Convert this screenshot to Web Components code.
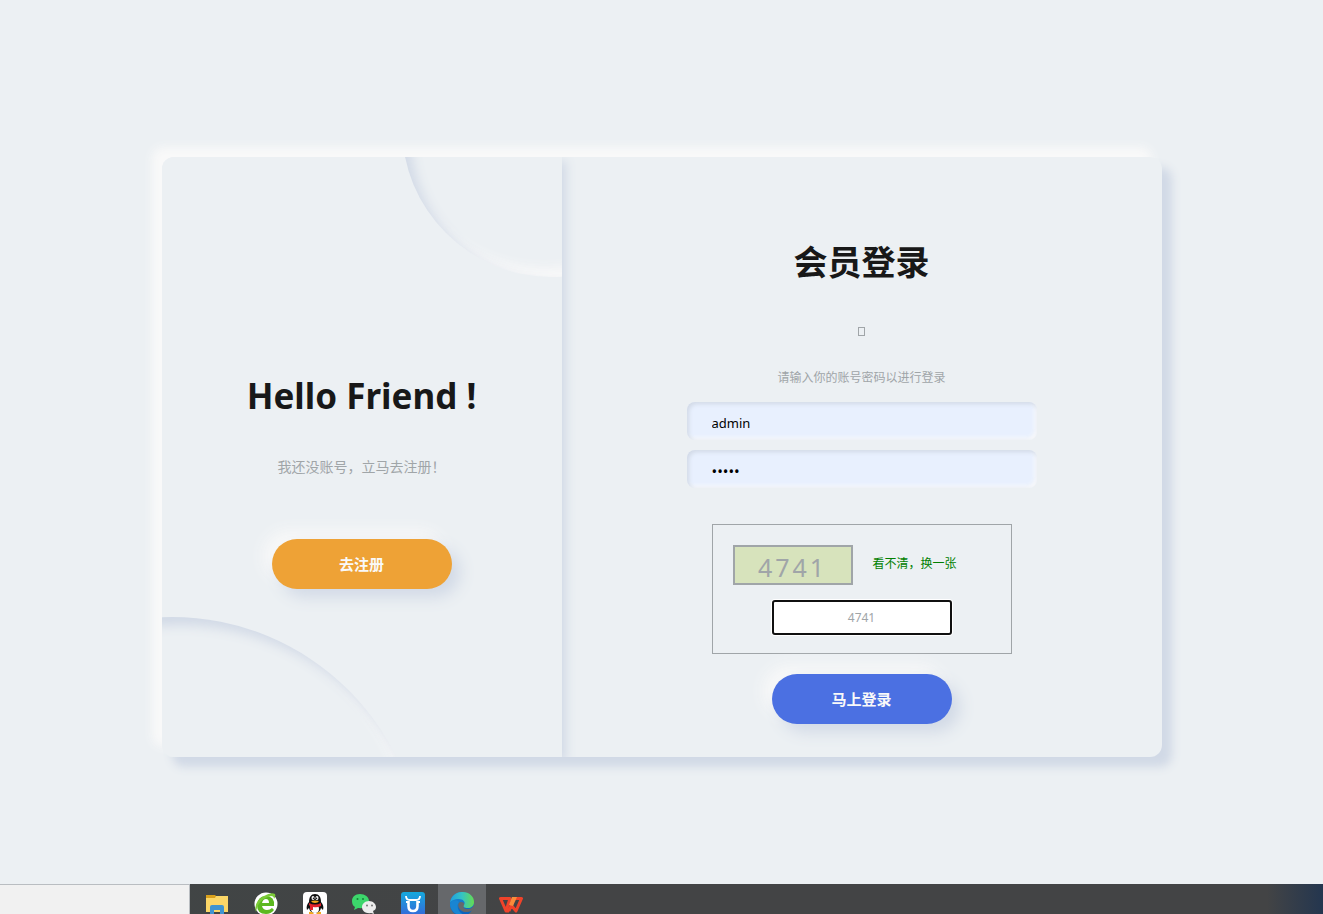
<!DOCTYPE html>
<html lang="zh-CN">
<head>
<meta charset="UTF-8">
<meta name="viewport" content="width=device-width, initial-scale=1">
<title>会员登录</title>
<style>
  * { box-sizing: border-box; }
  body {
    margin: 0;
    font-family: "Noto Sans", "Noto Sans CJK SC", sans-serif;
    font-size: 12px;
    color: #a0a5a8;
    background: #ecf0f3;
  }
</style>
</head>
<body>
<login-page>
  <welcome-panel slot="aside" titulo="Hello Friend !" texto="我还没账号，立马去注册！">
    <neu-button color="#eea236">去注册</neu-button>
  </welcome-panel>
  <login-form slot="main"></login-form>
</login-page>
<task-bar></task-bar>

<script>
class NeuButton extends HTMLElement {
  constructor() {
    super();
    this.shadow = this.attachShadow({ mode: 'open' });
  }

  connectedCallback() {
    this.shadow.innerHTML = `
      <style>
        :host { display: block; }
        button {
          display: block;
          width: 180px;
          height: 50px;
          padding: 0 0 2px;
          border: none;
          border-radius: 25px;
          background: ${this.getAttribute('color')};
          box-shadow: 8px 8px 16px #d1d9e6, -8px -8px 16px #f9f9f9;
          color: #f9f9f9;
          font: bold 15px "Noto Sans CJK SC", sans-serif;
          cursor: pointer;
        }
      </style>
      <button type="button"><slot></slot></button>
    `;
  }
}

class WelcomePanel extends HTMLElement {
  constructor() {
    super();
    this.shadow = this.attachShadow({ mode: 'open' });
  }

  connectedCallback() {
    this.shadow.innerHTML = `
      <style>
        :host {
          position: relative;
          display: flex;
          flex-direction: column;
          align-items: center;
          justify-content: center;
          box-sizing: border-box;
          height: 100%;
          padding-top: 20px;
          overflow: hidden;
          background: #ecf0f3;
        }
        .circle {
          position: absolute;
          border-radius: 50%;
          box-shadow: inset 8px 8px 12px #d1d9e6, inset -8px -8px 12px #f9f9f9;
        }
        .bottom { width: 500px; height: 500px; bottom: -60%; left: -60%; }
        .top { width: 300px; height: 300px; top: -30%; left: 60%; }
        h2 { margin: 0; font-size: 35px; line-height: 102px; color: #181818; }
        p { margin: 8px 0 60px; font-size: 14px; line-height: 24px; }
        neu-button { position: relative; }
      </style>
      <div class="circle bottom"></div>
      <div class="circle top"></div>
      <h2>${this.getAttribute('titulo')}</h2>
      <p>${this.getAttribute('texto')}</p>
      <slot></slot>
    `;
  }
}

class CaptchaBox extends HTMLElement {
  constructor() {
    super();
    this.shadow = this.attachShadow({ mode: 'open' });
    this.codigo = '4741';
  }

  connectedCallback() {
    this.shadow.innerHTML = `
      <style>
        :host {
          display: flex;
          flex-direction: column;
          align-items: center;
          gap: 15px;
          box-sizing: border-box;
          width: 300px;
          height: 130px;
          padding: 20px;
          border: 1px solid #a0a5a8;
        }
        .row { display: flex; align-items: center; gap: 20px; width: 100%; }
        .code {
          box-sizing: border-box;
          width: 120px;
          height: 40px;
          border: 2px solid #a0a5a8;
          background: #d7e3bc;
          font: 25px/40px "Noto Sans", sans-serif;
          letter-spacing: 3px;
          text-align: center;
        }
        a { color: green; text-decoration: none; line-height: 20px; padding-bottom: 2px; }
        input {
          box-sizing: border-box;
          flex: none;
          width: 180px;
          height: 35px;
          padding: 0;
          border: 2px solid #101010;
          border-radius: 3px;
          outline: none;
          background: #fff;
          box-shadow: 0 0 0 1px #fff;
          color: #a0a5a8;
          font: 12px "Noto Sans", sans-serif;
          text-align: center;
        }
      </style>
      <div class="row">
        <div class="code">${this.codigo}</div>
        <a href="#">看不清，换一张</a>
      </div>
      <input type="text" aria-label="验证码" value="${this.codigo}">
    `;
    this.shadow.querySelector('a').addEventListener('click', e => {
      e.preventDefault();
      this.codigo = String(Math.floor(1000 + Math.random() * 9000));
      this.shadow.querySelector('.code').textContent = this.codigo;
    });
  }
}

class LoginForm extends HTMLElement {
  constructor() {
    super();
    this.shadow = this.attachShadow({ mode: 'open' });
  }

  connectedCallback() {
    this.shadow.innerHTML = `
      <style>
        :host { display: block; }
        form {
          display: flex;
          flex-direction: column;
          align-items: center;
          padding-top: 54px;
        }
        h2 { margin: 0; font-size: 34px; line-height: 102px; color: #181818; }
        /* icon font placeholder */
        i {
          box-sizing: border-box;
          width: 7px;
          height: 9px;
          margin: 14px 0 30px;
          border: 1px solid #a0a5a8;
        }
        p { margin: 0 0 12px; line-height: 24px; }
        input {
          box-sizing: border-box;
          width: 350px;
          height: 38px;
          margin-bottom: 10px;
          padding: 4px 25px 0;
          border: none;
          border-radius: 8px;
          outline: none;
          background: #e8f0fe;
          box-shadow: inset 2px 2px 4px #d1d9e6, inset -2px -2px 4px #f9f9f9;
          color: #000;
          font: 13px "Noto Sans", sans-serif;
        }
        input[type="password"] { font-size: 15px; }
        captcha-box { margin: 26px 0 20px; }
      </style>
      <form>
        <h2>会员登录</h2>
        <i></i>
        <p>请输入你的账号密码以进行登录</p>
        <input type="text" aria-label="账号" value="admin">
        <input type="password" aria-label="密码" value="admin">
        <captcha-box></captcha-box>
        <neu-button color="#4b70e2">马上登录</neu-button>
      </form>
    `;
  }
}

class LoginPage extends HTMLElement {
  constructor() {
    super();
    this.shadow = this.attachShadow({ mode: 'open' });
  }

  connectedCallback() {
    this.shadow.innerHTML = `
      <style>
        :host {
          display: flex;
          align-items: center;
          justify-content: center;
          min-height: 100vh;
        }
        .card {
          display: grid;
          grid-template-columns: 2fr 3fr;
          width: 100%;
          max-width: 1000px;
          min-height: 600px;
          border-radius: 12px;
          overflow: hidden;
          background: #ecf0f3;
          box-shadow: 10px 10px 10px #d1d9e6, -10px -10px 10px #f9f9f9;
        }
        .aside { box-shadow: 4px 4px 10px #d1d9e6; }
      </style>
      <div class="card">
        <div class="aside"><slot name="aside"></slot></div>
        <div><slot name="main"></slot></div>
      </div>
    `;
  }
}

class TaskBar extends HTMLElement {
  constructor() {
    super();
    this.shadow = this.attachShadow({ mode: 'open' });
  }

  connectedCallback() {
    this.shadow.innerHTML = `
      <style>
        :host {
          position: fixed;
          left: 0;
          right: 0;
          bottom: 0;
          display: flex;
          height: 30px;
          overflow: hidden;
          background: linear-gradient(to left, #24364f, #434445 56px, #434445 60%, #404545);
        }
        .search {
          box-sizing: border-box;
          width: 190px;
          border: 1px solid #b9bdc1;
          border-width: 1px 1px 0 0;
          background: #f1f1f1;
        }
        nav { display: flex; gap: 1px; padding-left: 3px; }
        a { display: flex; justify-content: center; width: 48px; height: 30px; padding-top: 8px; box-sizing: border-box; }
        a.active { background: #66686b; }
        svg { flex: none; width: 24px; height: 24px; }
      </style>
      <div class="search"></div>
      <nav>
        <a href="#" aria-label="Explorer">
          <svg viewBox="0 0 24 24">
            <path d="M1 3h9l1 1h12v4H1z" fill="#d9a01c"/>
            <path d="M1 6h9l1-2h12v16H1z" fill="#fbd667"/>
            <path d="M5 22v-7q0-2 2-2h10q2 0 2 2v7h-4v-4H9v4z" fill="#3f94d1"/>
          </svg>
        </a>
        <a href="#" aria-label="360">
          <svg viewBox="0 0 24 24">
            <circle cx="12" cy="12" r="11.500" fill="#fff"/>
            <path d="M20 14H8q1 4 5 4 3 0 5-2l2 2q-3 4-8 4-9 0-9-9 1-9 9-9 9 0 8 10zM8 11h7q0-4-3-4t-4 4z" fill="#5cb81f" fill-rule="evenodd"/>
            <path d="M2 20Q-1 10 10 4 17 0 21 2q1 2-1 5 0-3-3-3Q4 7 2 20z" fill="#7ccb38"/>
          </svg>
        </a>
        <a href="#" aria-label="QQ">
          <svg viewBox="0 0 24 24">
            <rect width="24" height="24" rx="4" fill="#fff"/>
            <path d="M12 2c-4 0-6 3-6 8-2 2-3 5-2 8l2-2q1 5 6 5t6-5l2 2c1-3 0-6-2-8 0-5-2-8-6-8z" fill="#111"/>
            <ellipse cx="12" cy="17" rx="4" ry="4" fill="#fff"/>
            <ellipse cx="10" cy="6" rx="1.500" ry="2" fill="#fff"/>
            <ellipse cx="14" cy="6" rx="1.500" ry="2" fill="#fff"/>
            <circle cx="10.400" cy="6.200" r=".7"/>
            <circle cx="13.600" cy="6.200" r=".7"/>
            <path d="M8 9q4-1 8 0-1 2-4 2T8 9zM6 20q3-1 5 2H6zM18 20q-3-1-5 2h5z" fill="#f5a81c"/>
            <path d="M6 11q6 3 12 0v3q-4 2-8 1v3H7v-4l-1-1z" fill="#e3232c"/>
          </svg>
        </a>
        <a href="#" aria-label="WeChat">
          <svg viewBox="0 0 24 24">
            <path d="M8 2c-5 0-8 3-8 7 0 3 1 5 3 6l-1 3 4-2c8 1 11-3 11-7 0-4-4-7-9-7z" fill="#3cd66b"/>
            <circle cx="5.500" cy="7" r="1" fill="#16813a"/>
            <circle cx="11" cy="7" r="1" fill="#16813a"/>
            <path d="M17 9c-4 0-7 3-7 6 0 4 4 7 9 6l3 1-1-3c2-1 3-2 3-4 0-3-3-6-7-6z" fill="#ededed"/>
            <circle cx="15" cy="13.500" r="1" fill="#777"/>
            <circle cx="20" cy="13.500" r="1" fill="#777"/>
          </svg>
        </a>
        <a href="#" aria-label="Uniapp">
          <svg viewBox="0 0 24 24">
            <defs><linearGradient id="u" x2="0" y2="1"><stop stop-color="#16a9dd"/><stop offset="1" stop-color="#3568d8"/></linearGradient></defs>
            <rect width="24" height="24" rx="3" fill="url(#u)"/>
            <path d="M7.500 9v5q0 5 4.500 5t4.500-5V9" fill="none" stroke="#fff" stroke-width="2.600"/>
            <path d="M5 4q0 4 4 4h6q4 0 4-4M5 10h3M16 10h3" fill="none" stroke="#fff" stroke-width="1.800"/>
          </svg>
        </a>
        <a href="#" class="active" aria-label="Edge">
          <svg viewBox="0 0 24 24">
            <defs>
              <linearGradient id="e1"><stop stop-color="#1e9fe0"/><stop offset=".5" stop-color="#35c3c4"/><stop offset="1" stop-color="#66dc50"/></linearGradient>
              <linearGradient id="e2" x2="0" y2="1"><stop stop-color="#1b8fd8"/><stop offset="1" stop-color="#0b5cb8"/></linearGradient>
            </defs>
            <path d="M0 12C0 5 5 0 12 0s12 5 12 11c0 4-3 6-6 6-4 0-5-1-4-3 1-2 0-4-3-4-5 0-3 9 4 10 3 0 5 0 7-2-2 4-6 6-10 6-7 0-12-5-12-12z" fill="url(#e2)"/>
            <path d="M0 11C1 4 6 0 12 0c8 0 12 5 12 10 0 4-3 6-6 6-4 0-5-1-4-3 2-3-1-6-5-6-5 0-8 2-9 4z" fill="url(#e1)"/>
            <path d="M9 10c-3 4-1 11 6 13-8 2-15-4-15-11 1-4 7-5 9-2z" fill="#1985d2"/>
          </svg>
        </a>
        <a href="#" aria-label="WPS">
          <svg viewBox="0 0 24 24">
            <path d="M1.500 6.500H11L7 19zM10 19h-3L1.500 6.500M12 13l5 6 5.500-12.500H15L10 19" fill="none" stroke="#f0432a" stroke-width="3" stroke-linejoin="round"/>
            <path d="M10 13l3-8h5l-4 9z" fill="#fa8b3a"/>
          </svg>
        </a>
      </nav>
    `;
  }
}

customElements.define('neu-button', NeuButton);
customElements.define('welcome-panel', WelcomePanel);
customElements.define('captcha-box', CaptchaBox);
customElements.define('login-form', LoginForm);
customElements.define('login-page', LoginPage);
customElements.define('task-bar', TaskBar);
</script>
</body>
</html>
